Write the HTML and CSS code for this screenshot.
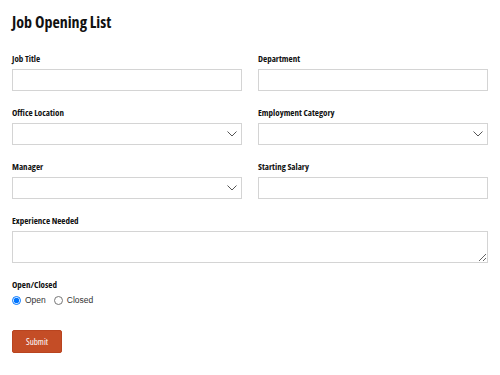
FILE: index.html
```html
<!DOCTYPE html>
<html>
<head>
<meta charset="utf-8">
<link rel="stylesheet" href="styles.css">
</head>
<body>
<div class="page">
  <h1 class="title">Job Opening List</h1>
  <form class="form">
    <div class="field">
      <label class="label">Job Title</label>
      <input class="control" type="text">
    </div>
    <div class="field">
      <label class="label">Department</label>
      <input class="control" type="text">
    </div>
    <div class="field">
      <label class="label">Office Location</label>
      <div class="select"><span class="chev"><svg width="10" height="6" viewBox="0 0 10 6"><path d="M0.5 0.5 L5 5 L9.5 0.5" fill="none" stroke="#555" stroke-width="1"/></svg></span></div>
    </div>
    <div class="field">
      <label class="label">Employment Category</label>
      <div class="select"><span class="chev"><svg width="10" height="6" viewBox="0 0 10 6"><path d="M0.5 0.5 L5 5 L9.5 0.5" fill="none" stroke="#555" stroke-width="1"/></svg></span></div>
    </div>
    <div class="field">
      <label class="label">Manager</label>
      <div class="select"><span class="chev"><svg width="10" height="6" viewBox="0 0 10 6"><path d="M0.5 0.5 L5 5 L9.5 0.5" fill="none" stroke="#555" stroke-width="1"/></svg></span></div>
    </div>
    <div class="field">
      <label class="label">Starting Salary</label>
      <input class="control" type="text">
    </div>
    <div class="field wide">
      <label class="label">Experience Needed</label>
      <textarea class="control area"></textarea>
    </div>
    <div class="field wide">
      <label class="label">Open/Closed</label>
      <div class="radios">
        <label class="radio"><input type="radio" name="oc" checked> Open</label>
        <label class="radio"><input type="radio" name="oc"> Closed</label>
      </div>
    </div>
  </form>
  <button class="submit" type="button">Submit</button>
</div>
</body>
</html>
```
FILE: styles.css
```css
html, body {
  margin: 0;
  padding: 0;
  background: #fff;
}
.page {
  padding: 11px 12px 0 12px;
  width: 476px;
  font-family: "Open Sans", "DejaVu Sans Condensed", sans-serif;
}
.title {
  margin: 0;
  font-size: 16px;
  line-height: 22px;
  font-weight: 700;
  font-stretch: 75%;
  color: #111;
}
.form {
  margin-top: 19px;
  display: grid;
  grid-template-columns: 230px 230px;
  column-gap: 16px;
  row-gap: 15px;
}
.field {
  display: flex;
  flex-direction: column;
}
.wide {
  grid-column: 1 / 3;
}
.label {
  font-size: 9px;
  line-height: 14px;
  font-weight: 700;
  font-stretch: 75%;
  color: #111;
  margin-bottom: 3px;
}
.control {
  box-sizing: border-box;
  height: 22px;
  width: 100%;
  border: 1px solid #d4d4d4;
  border-radius: 0;
  margin: 0;
  padding: 0 4px;
  background: #fff;
}
.area {
  height: 32px;
  resize: vertical;
  display: block;
}
.select {
  box-sizing: border-box;
  height: 22px;
  border: 1px solid #d4d4d4;
  display: flex;
  align-items: center;
  justify-content: flex-end;
  padding-right: 4px;
}
.chev {
  display: flex;
}
.radios {
  display: flex;
  align-items: center;
  gap: 8px;
  height: 14px;
  margin-top: -2px;
}
.radio {
  display: flex;
  align-items: center;
  font-family: "Liberation Sans", Arial, sans-serif;
  font-size: 8.5px;
  color: #333;
}
.radio input {
  margin: 0 4px 0 0;
  width: 9px;
  height: 9px;
}
.submit {
  display: block;
  margin-top: 23px;
  width: 50px;
  height: 23px;
  border: 1px solid #b9441f;
  border-radius: 2px;
  background: #c44d26;
  color: #fff;
  font-family: "Open Sans", sans-serif;
  font-stretch: 75%;
  font-size: 9px;
  padding: 0;
}
```
